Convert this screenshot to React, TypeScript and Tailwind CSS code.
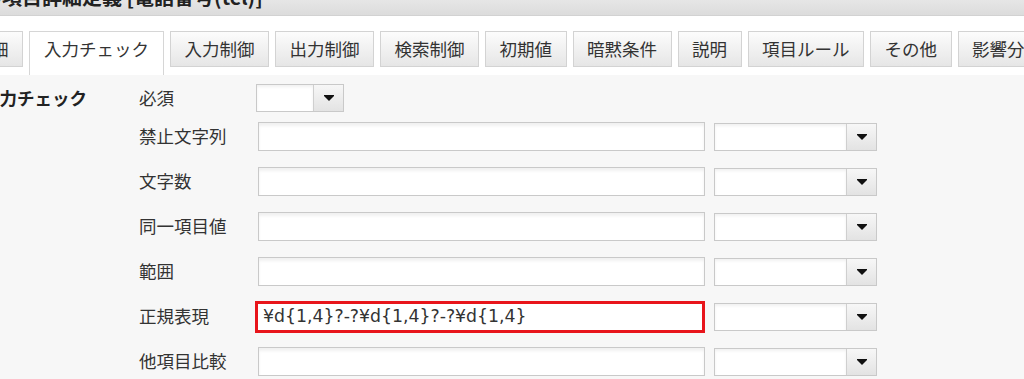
import React from "react";

const tabs = [
  "明細",
  "入力チェック",
  "入力制御",
  "出力制御",
  "検索制御",
  "初期値",
  "暗黙条件",
  "説明",
  "項目ルール",
  "その他",
  "影響分析",
];

const rows = ["禁止文字列", "文字数", "同一項目値", "範囲", "正規表現", "他項目比較"];

const Arrow = () => (
  <svg width="10" height="6" viewBox="0 0 10 6">
    <polygon points="0,0 10,0 10,1 5,6 0,1" fill="#111" />
  </svg>
);

const SelectBox = ({ w }: { w: string }) => (
  <div className={`flex h-full ${w} border border-[#c9c9c9] bg-white`}>
    <div className="flex-1 shadow-[inset_0_2px_3px_rgba(0,0,0,0.06)]" />
    <div className="flex w-[30px] items-center justify-center border-l border-[#cfcfcf] bg-gradient-to-b from-[#f7f7f7] to-[#e3e3e3]">
      <Arrow />
    </div>
  </div>
);

const App = () => {
  return (
    <div
      className="h-[379px] w-[1024px] overflow-hidden bg-white text-[#333]"
      style={{ fontFamily: '"Noto Sans CJK JP", "Noto Sans", sans-serif' }}
    >
      <div className="h-[16px] overflow-hidden border-b border-[#d2d2d2] bg-gradient-to-b from-[#e6e6e6] to-[#dcdcdc]">
        <div className="-mt-[13px] -ml-[18px] whitespace-nowrap text-[20px] font-bold leading-[20px] text-[#222]">
          の項目詳細定義 [電話番号(tel)]
        </div>
      </div>

      <div className="mt-[15px] flex h-[44px] gap-[6px] -ml-[41px]">
        {tabs.map((t) =>
          t === "入力チェック" ? (
            <div
              key={t}
              className="flex h-[44px] shrink-0 items-start border border-b-0 border-[#d6d6d6] bg-white px-[14px] pt-[5px] text-[17.5px] leading-[24px] whitespace-nowrap"
            >
              {t}
            </div>
          ) : (
            <div
              key={t}
              className="flex h-[36px] shrink-0 items-center border border-[#d3d3d3] bg-gradient-to-b from-[#fcfcfc] to-[#e6e6e6] px-[13.5px] text-[17.5px] whitespace-nowrap"
            >
              {t}
            </div>
          )
        )}
      </div>

      <div className="flex h-[304px] bg-[#f7f7f7] pt-[9px]">
        <div className="-ml-[18px] w-[157px] shrink-0 text-[17.5px] font-bold leading-[28px] text-[#222]">
          入力チェック
        </div>
        <div className="flex flex-col">
          <div className="flex h-[28px] items-center">
            <div className="w-[117px] text-[17.5px]">必須</div>
            <SelectBox w="w-[88px]" />
          </div>
          <div className="mt-[10px] flex flex-col gap-[16px]">
            {rows.map((r) => (
              <div key={r} className="flex h-[29px] items-center">
                <div className="w-[117px] text-[17.5px]">{r}</div>
                {r === "正規表現" ? (
                  <div
                    className="-ml-[1px] flex h-[32px] w-[450px] items-center border-[3px] border-[#e8151b] bg-white pl-[5px] text-[17.3px] text-[#333]"
                    style={{ fontFamily: '"DejaVu Sans", sans-serif' }}
                  >
                    ¥d{"{"}1,4{"}"}?-?¥d{"{"}1,4{"}"}?-?¥d{"{"}1,4{"}"}
                  </div>
                ) : (
                  <div className="ml-[2px] h-full w-[447px] border border-[#c9c9c9] bg-white shadow-[inset_0_3px_3px_rgba(0,0,0,0.06)]" />
                )}
                <div className="ml-[9px] h-[28px]">
                  <SelectBox w="w-[163px]" />
                </div>
              </div>
            ))}
          </div>
        </div>
      </div>
    </div>
  );
};

export default App;
